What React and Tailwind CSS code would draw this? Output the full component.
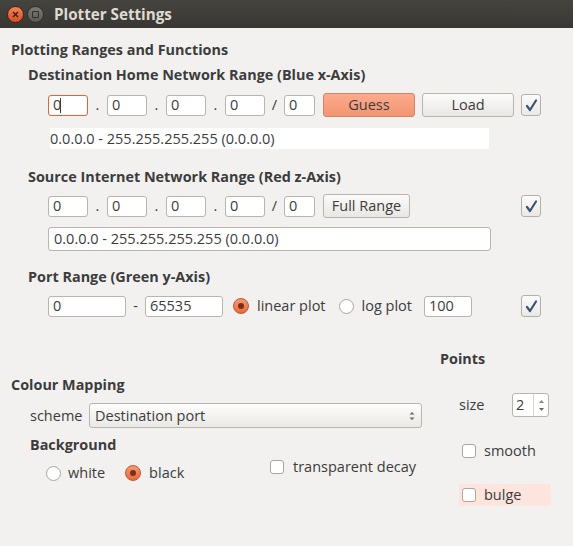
import React from 'react';

const font = { fontFamily: '"Open Sans", "Noto Sans", "Liberation Sans", sans-serif' };

function Field({ w, value, focused, className = '' }) {
    return (
        <div
            className={`h-[21px] ${w} bg-white rounded-[3px] border ${focused ? 'border-[#e0643a]' : 'border-[#b8b5b0]'} flex items-center pl-[4px] text-[14.5px] text-[#3c3c3c] ${className}`}
        >
            {value}
            {focused && <span className="w-px h-[15px] bg-[#3c3c3c] -ml-[1px]" />}
        </div>
    );
}

function Sep({ ch }) {
    return <span className="w-[19px] text-center text-[14.5px] text-[#3c3c3c]">{ch}</span>;
}

function BigCheck() {
    return (
        <div className="w-[20px] h-[22px] rounded-[3px] border border-[#b3b0ab] bg-gradient-to-b from-[#fbfbfa] to-[#ebe9e6] flex items-center justify-center">
            <svg width="13" height="13" viewBox="0 0 13 13">
                <path d="M2 7 L5 11 L11 1.5" fill="none" stroke="#3b5578" strokeWidth="2.2" strokeLinejoin="round" strokeLinecap="round" />
            </svg>
        </div>
    );
}

function SmallCheck() {
    return <div className="w-[14px] h-[14px] shrink-0 rounded-[3px] border border-[#a9a6a1] bg-white" />;
}

function Radio({ on }) {
    return on ? (
        <div className="w-[16px] h-[16px] rounded-full border border-[#c4532d] bg-gradient-to-b from-[#f39a78] to-[#e66a3e] flex items-center justify-center">
            <div className="w-[6px] h-[6px] rounded-full bg-[#7a3016]" />
        </div>
    ) : (
        <div className="w-[15px] h-[15px] rounded-full border border-[#a9a6a1] bg-white" />
    );
}

function Heading({ children, className = '' }) {
    return <div className={`h-[20px] leading-[20px] font-bold text-[14.4px] text-[#3c3c3c] whitespace-nowrap ${className}`}>{children}</div>;
}

function IpRow({ focused }) {
    return (
        <div className="flex items-center">
            <Field w="w-[40px]" value="0" focused={focused} />
            <Sep ch="." />
            <Field w="w-[40px]" value="0" />
            <Sep ch="." />
            <Field w="w-[40px]" value="0" />
            <Sep ch="." />
            <Field w="w-[40px]" value="0" />
            <Sep ch="/" />
            <Field w="w-[31px]" value="0" />
        </div>
    );
}

export default function App() {
    return (
        <div style={font} className="w-[573px] h-[546px] bg-[#f2f1f0] flex flex-col overflow-hidden text-[#3c3c3c] text-[14.5px]">
            {/* title bar */}
            <div className="h-[28px] bg-gradient-to-b from-[#45443f] to-[#383733] flex items-center pl-[7px]">
                <div className="w-[17px] h-[17px] rounded-full bg-gradient-to-b from-[#f4825a] to-[#dd4a1c] border border-[#3a2a20] flex items-center justify-center">
                    <svg width="7" height="7" viewBox="0 0 7 7">
                        <path d="M1 1 L6 6 M6 1 L1 6" stroke="#3a2520" strokeWidth="1.6" />
                    </svg>
                </div>
                <div className="ml-[3px] w-[17px] h-[17px] rounded-full bg-gradient-to-b from-[#7c7b76] to-[#5a5954] border border-[#2e2d2a] flex items-center justify-center">
                    <div className="w-[7px] h-[7px] border border-[#2f2e2b] rounded-[1px]" />
                </div>
                <span className="ml-[10px] font-bold text-[15.2px] text-[#dfdbd2]">Plotter Settings</span>
            </div>

            <div className="pl-[11px] pt-[12px]">
                <Heading>Plotting Ranges and Functions</Heading>

                <div className="pl-[17px]">
                    <Heading className="mt-[5px]">Destination Home Network Range (Blue x-Axis)</Heading>
                    <div className="mt-[8px] h-[24px] w-[493px] flex items-center ml-[20px]">
                        <IpRow focused />
                        <button className="ml-[8px] w-[92px] h-[24px] rounded-[3px] border border-[#d58466] bg-gradient-to-b from-[#fbab8d] to-[#f39470] text-[14.5px] text-[#3c3c3c]">Guess</button>
                        <button className="ml-[7px] w-[92px] h-[24px] rounded-[3px] border border-[#b8b5b0] bg-gradient-to-b from-[#fbfbfa] to-[#e9e7e4] text-[14.5px] text-[#3c3c3c]">Load</button>
                        <div className="ml-auto"><BigCheck /></div>
                    </div>
                    <div className="mt-[11px] ml-[22px] w-[439px] h-[21px] bg-white flex items-center whitespace-nowrap">0.0.0.0 - 255.255.255.255 (0.0.0.0)</div>

                    <Heading className="mt-[18px]">Source Internet Network Range (Red z-Axis)</Heading>
                    <div className="mt-[7px] h-[24px] w-[493px] flex items-center ml-[20px]">
                        <IpRow />
                        <button className="ml-[8px] w-[87px] h-[24px] rounded-[3px] border border-[#b8b5b0] bg-gradient-to-b from-[#fbfbfa] to-[#e9e7e4] text-[14.5px] text-[#3c3c3c]">Full Range</button>
                        <div className="ml-auto"><BigCheck /></div>
                    </div>
                    <div className="mt-[9px] ml-[20px] w-[443px] h-[24px] bg-white rounded-[3px] border border-[#b8b5b0] flex items-center pl-[5px] whitespace-nowrap">0.0.0.0 - 255.255.255.255 (0.0.0.0)</div>

                    <Heading className="mt-[16px]">Port Range (Green y-Axis)</Heading>
                    <div className="mt-[7px] h-[24px] w-[493px] flex items-center ml-[20px] whitespace-nowrap">
                        <Field w="w-[78px]" value="0" />
                        <span className="w-[19px] text-center">-</span>
                        <Field w="w-[78px]" value="65535" />
                        <div className="ml-[10px]"><Radio on /></div>
                        <span className="ml-[8px]">linear plot</span>
                        <div className="ml-[13px]"><Radio /></div>
                        <span className="ml-[8px]">log plot</span>
                        <Field w="w-[48px]" value="100" className="ml-[12px]" />
                        <div className="ml-auto"><BigCheck /></div>
                    </div>
                </div>
            </div>

            {/* lower area */}
            <div className="flex pl-[11px] mt-[31px]">
                <div className="w-[429px] pt-[26px]">
                    <Heading>Colour Mapping</Heading>
                    <div className="mt-[8px] flex items-center pl-[19px]">
                        <span className="w-[59px]">scheme</span>
                        <div className="w-[333px] h-[25px] rounded-[3px] border border-[#b8b5b0] bg-gradient-to-b from-[#fdfdfc] to-[#ebe9e6] flex items-center pl-[5px] pr-[6px]">
                            <span className="flex-1">Destination port</span>
                            <svg width="6" height="10" viewBox="0 0 6 10">
                                <path d="M0.5 3.5 L3 1 L5.5 3.5 Z M0.5 6.5 L3 9 L5.5 6.5 Z" fill="#6a6863" />
                            </svg>
                        </div>
                    </div>
                    <div className="mt-[7px] flex pl-[19px]">
                        <div className="w-[240px]">
                            <Heading>Background</Heading>
                            <div className="mt-[8px] h-[20px] flex items-center pl-[16px]">
                                <Radio />
                                <span className="ml-[7px]">white</span>
                                <div className="ml-[20px]"><Radio on /></div>
                                <span className="ml-[8px]">black</span>
                            </div>
                        </div>
                        <div className="mt-[22px] h-[20px] flex items-center whitespace-nowrap">
                            <SmallCheck />
                            <span className="ml-[9px]">transparent decay</span>
                        </div>
                    </div>
                </div>
                <div className="flex-1">
                    <Heading>Points</Heading>
                    <div className="mt-[24px] h-[24px] flex items-center pl-[19px]">
                        <span>size</span>
                        <div className="ml-auto mr-[24px] w-[37px] h-[24px] rounded-[3px] border border-[#b8b5b0] bg-white flex">
                            <div className="flex-1 flex items-center pl-[3px]">2</div>
                            <div className="w-[15px] border-l border-[#d6d4d0] flex flex-col items-center justify-center gap-[5px]">
                                <svg width="5" height="3" viewBox="0 0 5 3"><path d="M0 3 L2.5 0 L5 3 Z" fill="#8a8883" /></svg>
                                <svg width="5" height="3" viewBox="0 0 5 3"><path d="M0 0 L2.5 3 L5 0 Z" fill="#6a6863" /></svg>
                            </div>
                        </div>
                    </div>
                    <div className="mt-[24px] h-[20px] flex items-center pl-[22px]">
                        <SmallCheck />
                        <span className="ml-[8px]">smooth</span>
                    </div>
                    <div className="mt-[23px] ml-[19px] w-[92px] h-[22px] bg-[#fde4dc] flex items-center pl-[3px]">
                        <SmallCheck />
                        <span className="ml-[8px]">bulge</span>
                    </div>
                </div>
            </div>
        </div>
    );
}
